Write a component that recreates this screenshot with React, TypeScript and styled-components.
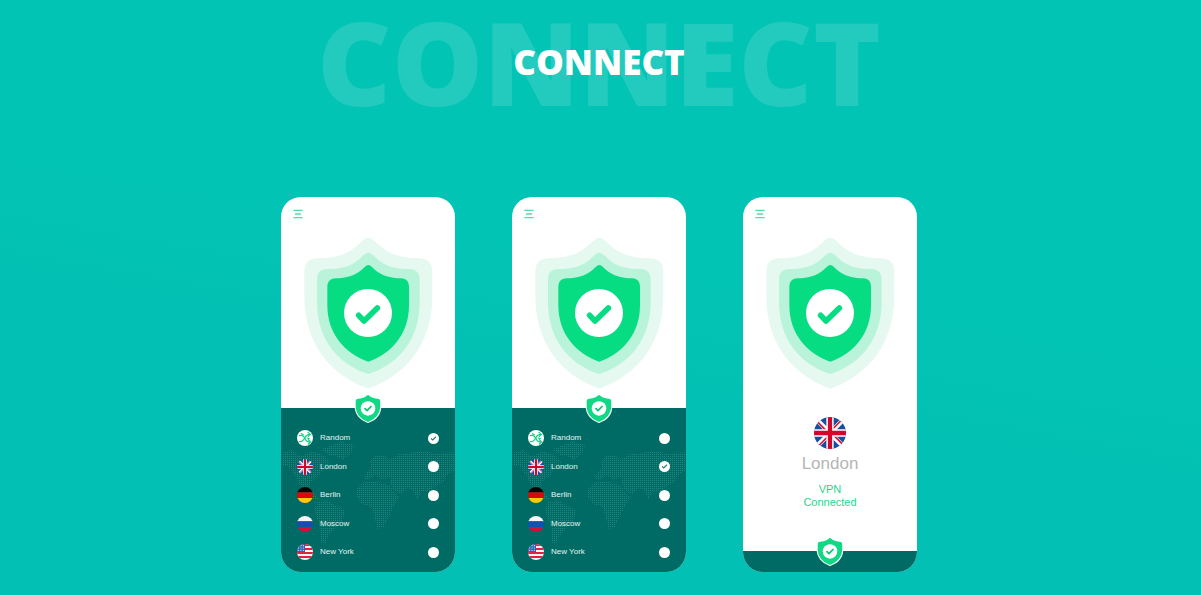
import React, { useId, useState } from "react";
import styled, { createGlobalStyle } from "styled-components";

const GlobalStyle = createGlobalStyle`
  *, *::before, *::after { box-sizing: border-box; }
  body {
    margin: 0;
    min-height: 100vh;
    background: linear-gradient(190deg, #02c4b4 45%, #02c1b4 60%);
    font-family: "Liberation Sans", Arial, sans-serif;
  }
`;

const Page = styled.main`
  display: flex;
  flex-direction: column;
  align-items: center;
  gap: 73px;
  padding: 0 3px 22px 0;
`;

const Hero = styled.header`
  display: grid;
  place-items: center;
  height: 124px;
  font-family: "Open Sans", sans-serif;
  font-weight: 800;
`;

const GhostTitle = styled.span`
  grid-area: 1 / 1;
  font-size: 115px;
  line-height: 122px;
  color: rgba(255, 255, 255, 0.13);
`;

const Title = styled.h1`
  grid-area: 1 / 1;
  margin: 0;
  font-size: 35px;
  font-weight: 800;
  line-height: 48px;
  color: #fff;
`;

const Phones = styled.div`
  display: flex;
  flex-wrap: wrap;
  justify-content: center;
  gap: 57px;
`;

const Phone = styled.section`
  display: flex;
  flex-direction: column;
  align-items: center;
  width: 174px;
  border-radius: 20px;
  overflow: hidden;
  background: #fff;
`;

const TopBar = styled.div`
  align-self: stretch;
  display: flex;
  height: 40px;
  padding: 12px;
`;

const MenuButton = styled.button`
  width: 10px;
  height: 10px;
  padding: 0;
  border: 0;
  background: none;
  cursor: pointer;
  svg { display: block; }
`;

const HeroShield = styled.svg`
  display: block;
  width: 132px;
  height: 153px;
`;

const Panel = styled.div<{ $compact?: boolean }>`
  position: relative;
  align-self: stretch;
  margin-top: ${(p) => (p.$compact ? "auto" : "18px")};
  padding: ${(p) => (p.$compact ? "0" : "22px 16px 12px")};
  min-height: ${(p) => (p.$compact ? "21px" : "0")};
  background: #006b65;
`;

const BadgeButton = styled.button`
  position: absolute;
  top: -15px;
  left: 50%;
  width: 28px;
  height: 32px;
  margin-left: -14px;
  padding: 0;
  border: 0;
  background: none;
  cursor: pointer;
  svg { display: block; }
`;

const MapBackdrop = styled.svg`
  position: absolute;
  inset: 0;
  width: 100%;
  height: 100%;
`;

const List = styled.fieldset`
  position: relative;
  display: flex;
  flex-direction: column;
  justify-content: space-between;
  height: 130px;
  margin: 0;
  padding: 0;
  border: 0;
`;

const Row = styled.label`
  display: flex;
  align-items: center;
  gap: 7px;
  height: 16px;
  font-size: 8px;
  line-height: 16px;
  color: #e6f4f2;
  cursor: pointer;
`;

const RowName = styled.span`
  flex: 1;
`;

const RadioWrap = styled.span`
  position: relative;
  display: block;
  width: 11px;
  height: 11px;
`;

const Radio = styled.input`
  appearance: none;
  display: block;
  width: 11px;
  height: 11px;
  margin: 0;
  border-radius: 50%;
  background: #fff;
  cursor: pointer;
`;

const RadioTick = styled.svg`
  position: absolute;
  inset: 0;
  pointer-events: none;
`;

const FlagSvg = styled.svg`
  display: block;
  flex: none;
`;

const Status = styled.div`
  display: flex;
  flex-direction: column;
  align-items: center;
  margin-top: 27px;
  padding-bottom: 42px;
`;

const City = styled.h2`
  margin: 4px 0 9px;
  font-size: 17px;
  font-weight: 400;
  line-height: 21px;
  color: #b5b5b5;
`;

const StatusText = styled.p`
  margin: 0;
  font-size: 11px;
  line-height: 13px;
  text-align: center;
  color: #1fd68d;
`;

type Place = "Random" | "London" | "Berlin" | "Moscow" | "New York";
const PLACES: Place[] = ["Random", "London", "Berlin", "Moscow", "New York"];

function FlagArt({ place }: { place: Place }) {
  switch (place) {
    case "Random":
      return (
        <>
          <rect width="48" height="48" fill="#fff" />
          <g fill="none" stroke="#10cf83" strokeWidth="3.6" strokeLinecap="round" strokeLinejoin="round">
            <path d="M7 17C17 14 20 18 23 24S28 36 39 36" />
            <path d="M7 35C17 36 20 30 23 24S28 13 39 13" />
            <path d="M33 7L40 13L34 19M34 29L41 36L34 42" />
            <path d="M13 11L19 14M31 24L37 26" />
          </g>
        </>
      );
    case "London":
      return (
        <>
          <rect width="48" height="48" fill="#1550a0" />
          <path d="M2 2l44 44M46 2L2 46" stroke="#fff" strokeWidth="7" />
          <path d="M3 5l18 18M45 43L27 25M43 3L25 21M5 45l18-18" stroke="#d8173a" strokeWidth="2.6" />
          <path d="M24 0v48M0 24h48" stroke="#fff" strokeWidth="11" />
          <path d="M24 0v48M0 24h48" stroke="#d0072b" strokeWidth="6.4" />
        </>
      );
    case "Berlin":
      return (
        <>
          <rect width="48" height="16" fill="#080404" />
          <rect y="16" width="48" height="17" fill="#d60a0a" />
          <rect y="33" width="48" height="15" fill="#ffc90e" />
        </>
      );
    case "Moscow":
      return (
        <>
          <rect width="48" height="16" fill="#f4f6fa" />
          <rect y="16" width="48" height="17" fill="#1450b4" />
          <rect y="33" width="48" height="15" fill="#d3103c" />
        </>
      );
    default:
      return (
        <>
          <rect width="48" height="48" fill="#f6f4f6" />
          <path d="M0 3h48M0 15h48M0 27h48M0 39h48" stroke="#dc2340" strokeWidth="6" />
          <rect width="24" height="24" fill="#2b62b5" />
          <g fill="#fff">
            {[5, 12, 19].map((y) =>
              [5, 12, 19].map((x) => <circle key={`${x}-${y}`} cx={x} cy={y} r="1.7" />)
            )}
          </g>
        </>
      );
  }
}

function Flag({ place, size }: { place: Place; size: number }) {
  const id = useId();
  return (
    <FlagSvg width={size} height={size} viewBox="0 0 48 48" aria-hidden="true">
      <clipPath id={id}>
        <circle cx="24" cy="24" r="24" />
      </clipPath>
      <g clipPath={`url(#${id})`}>
        <FlagArt place={place} />
      </g>
    </FlagSvg>
  );
}

const INNER =
  "M280 225C289 225 296 239 312 248C334 261 352 264 378 265C395 266 402 275 402 292V345C402 430 352 490 280 515C208 490 157 430 157 345V292C157 275 165 266 182 265C208 264 226 261 248 248C264 239 271 225 280 225Z";

function BigShield() {
  return (
    <HeroShield viewBox="81 141 396 459" role="img" aria-label="Protected">
      <path
        fill="#e5f9f0"
        d="M280 143C292 143 302 158 323 174C355 198 390 204 432 205C459 206 472 219 472 245V318C472 455 400 553 280 596C160 553 88 455 88 318V245C88 219 101 206 128 205C170 204 205 198 237 174C258 158 268 143 280 143Z"
      />
      <path
        fill="#b9f3da"
        d="M280 188C291 188 299 203 318 216C344 233 370 237 402 237C425 238 434 249 434 270V335C434 444 376 520 280 552C184 520 126 444 126 335V270C126 249 135 238 158 237C190 237 216 233 242 216C261 203 269 188 280 188Z"
      />
      <path fill="#06dc82" d={INNER} />
      <circle cx="279" cy="369" r="72" fill="#fff" />
      <path
        d="M251 376L267 393L307 354"
        fill="none"
        stroke="#06dc82"
        strokeWidth="17"
        strokeLinecap="round"
        strokeLinejoin="round"
      />
    </HeroShield>
  );
}

function Badge() {
  return (
    <BadgeButton type="button" aria-label="Toggle connection">
      <svg width="28" height="32" viewBox="140 204 280 344" preserveAspectRatio="none">
        <path d={INNER} fill="#fff" stroke="#fff" strokeWidth="22" strokeLinejoin="round" />
        <path d={INNER} fill="#10d884" />
        <ellipse cx="280" cy="370" rx="73" ry="78" fill="#fff" />
        <path
          d="M250 373L270 393L310 349"
          fill="none"
          stroke="#10c87c"
          strokeWidth="19"
          strokeLinecap="round"
          strokeLinejoin="round"
        />
      </svg>
    </BadgeButton>
  );
}

function WorldMap() {
  const id = useId();
  return (
    <MapBackdrop viewBox="18 69 522 492" preserveAspectRatio="none" aria-hidden="true">
      <pattern id={id} x="18" y="69" width="6" height="6" patternUnits="userSpaceOnUse">
        <rect width="3" height="3" fill="#2c8c82" />
      </pattern>
      <g fill={`url(#${id})`} opacity="0.8">
        <path d="M20 205L50 194L78 214L112 198L150 212L168 235L142 254L132 272L112 285L102 302L116 322L134 345L120 346L95 325L75 300L60 270L40 244L20 240Z" />
        <path d="M140 192L200 170L238 180L228 205L206 224L185 214L160 210Z" />
        <path d="M126 352L155 345L185 362L212 378L202 405L180 430L162 450L150 477L136 472L135 430L126 402L118 375Z" />
        <path d="M266 284L275 262L290 248L284 232L300 212L326 209L342 224L370 208L402 204L442 199L482 205L540 202V254L520 268L505 290L482 305L462 320L440 318L428 344L412 312L394 310L378 328L358 318L344 290L350 276L322 284L300 270L285 284Z" />
        <path d="M246 312L266 292L300 288L345 302L364 330L376 330L360 356L346 385L326 426L308 432L298 392L290 366L262 357L246 337Z" />
      </g>
    </MapBackdrop>
  );
}

function PhoneHeader() {
  return (
    <>
      <TopBar>
        <MenuButton type="button" aria-label="Menu">
          <svg width="10" height="10" viewBox="0 0 30 30" stroke="#4fdfa8" strokeWidth="4">
            <path d="M1 4h28M6 15h18M1 26h28" />
          </svg>
        </MenuButton>
      </TopBar>
      <BigShield />
    </>
  );
}

function PickerPhone({ initial }: { initial: Place }) {
  const name = useId();
  const [selected, setSelected] = useState<Place>(initial);
  return (
    <Phone>
      <PhoneHeader />
      <Panel>
        <WorldMap />
        <List aria-label="Location">
          {PLACES.map((place) => (
            <Row key={place}>
              <Flag place={place} size={16} />
              <RowName>{place}</RowName>
              <RadioWrap>
                <Radio
                  type="radio"
                  name={name}
                  value={place}
                  checked={selected === place}
                  onChange={() => setSelected(place)}
                />
                {selected === place && (
                  <RadioTick width="11" height="11" viewBox="0 0 33 33" aria-hidden="true">
                    <path
                      d="M10 17L14 21L23 12"
                      fill="none"
                      stroke="#2f7f78"
                      strokeWidth="3.4"
                      strokeLinecap="round"
                      strokeLinejoin="round"
                    />
                  </RadioTick>
                )}
              </RadioWrap>
            </Row>
          ))}
        </List>
        <Badge />
      </Panel>
    </Phone>
  );
}

function ConnectedPhone() {
  return (
    <Phone>
      <PhoneHeader />
      <Status>
        <Flag place="London" size={32} />
        <City>London</City>
        <StatusText>
          VPN
          <br />
          Connected
        </StatusText>
      </Status>
      <Panel $compact>
        <Badge />
      </Panel>
    </Phone>
  );
}

export default function App() {
  return (
    <>
      <GlobalStyle />
      <Page>
        <Hero>
          <GhostTitle aria-hidden="true">CONNECT</GhostTitle>
          <Title>CONNECT</Title>
        </Hero>
        <Phones>
          <PickerPhone initial="Random" />
          <PickerPhone initial="London" />
          <ConnectedPhone />
        </Phones>
      </Page>
    </>
  );
}
